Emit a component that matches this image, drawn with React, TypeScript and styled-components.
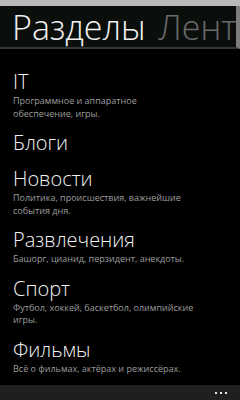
import styled, {createGlobalStyle} from 'styled-components';

const GlobalStyle = createGlobalStyle`
	html, body {
		margin: 0;
		padding: 0;
		background: #000;
	}
	body {
		font-family: "Open Sans", "Noto Sans", sans-serif;
		color: #fff;
	}
`

//styles
const Screen = styled.div`
	width: 240px;
	height: 400px;
	display: flex;
	flex-direction: column;
	background: #000;
	overflow: hidden;
`

const StatusStrip = styled.div`
	height: 6px;
	background: #b9b9b9;
`

const PivotHeader = styled.div`
	height: 43px;
	display: flex;
	align-items: flex-end;
	gap: 13px;
	padding-left: 12px;
	background: #0a0f0c;
	border-bottom: 2px solid #363636;
	border-right: 4px solid #7c7c7c;
	white-space: nowrap;
	overflow: hidden;
`

const PivotTitle = styled.span<{$active?: boolean}>`
	font-size: 34px;
	font-weight: 300;
	line-height: 40px;
	color: ${p => p.$active ? '#f2f2f2' : '#6a6a6a'};
`

const List = styled.div`
	flex: 1;
	display: flex;
	flex-direction: column;
	padding: 20px 45px 0 13px;
`

const Item = styled.div`
	padding-bottom: 10px;
`

const ItemTitle = styled.div`
	font-size: 20px;
	line-height: 26px;
	font-weight: 300;
	color: #f4f4f4;
`

const ItemDesc = styled.div`
	font-size: 9px;
	line-height: 12.5px;
	color: #9d9d9d;
`

const AppBar = styled.div`
	height: 15px;
	display: flex;
	align-items: center;
	justify-content: flex-end;
	gap: 3px;
	padding-right: 13px;
	background: #1f1f1f;
`

const Dot = styled.span`
	width: 2px;
	height: 2px;
	background: #e8e8e8;
`

const sections = [
	{title: 'IT', desc: 'Программное и аппаратное обеспечение, игры.'},
	{title: 'Блоги', desc: ''},
	{title: 'Новости', desc: 'Политика, происшествия, важнейшие события дня.'},
	{title: 'Развлечения', desc: 'Башорг, цианид, перзидент, анекдоты.'},
	{title: 'Спорт', desc: 'Футбол, хоккей, баскетбол, олимпийские игры.'},
	{title: 'Фильмы', desc: 'Всё о фильмах, актёрах и режиссёрах.'},
];

export default function App() {
	return(
		<>
			<GlobalStyle/>
			<Screen>
				<StatusStrip/>
				<PivotHeader>
					<PivotTitle $active>Разделы</PivotTitle>
					<PivotTitle>Ленты</PivotTitle>
				</PivotHeader>
				<List>
					{sections.map(s => (
						<Item key={s.title}>
							<ItemTitle>{s.title}</ItemTitle>
							{s.desc && <ItemDesc>{s.desc}</ItemDesc>}
						</Item>
						))}
				</List>
				<AppBar>
					<Dot/><Dot/><Dot/>
				</AppBar>
			</Screen>
		</>
		)
}
